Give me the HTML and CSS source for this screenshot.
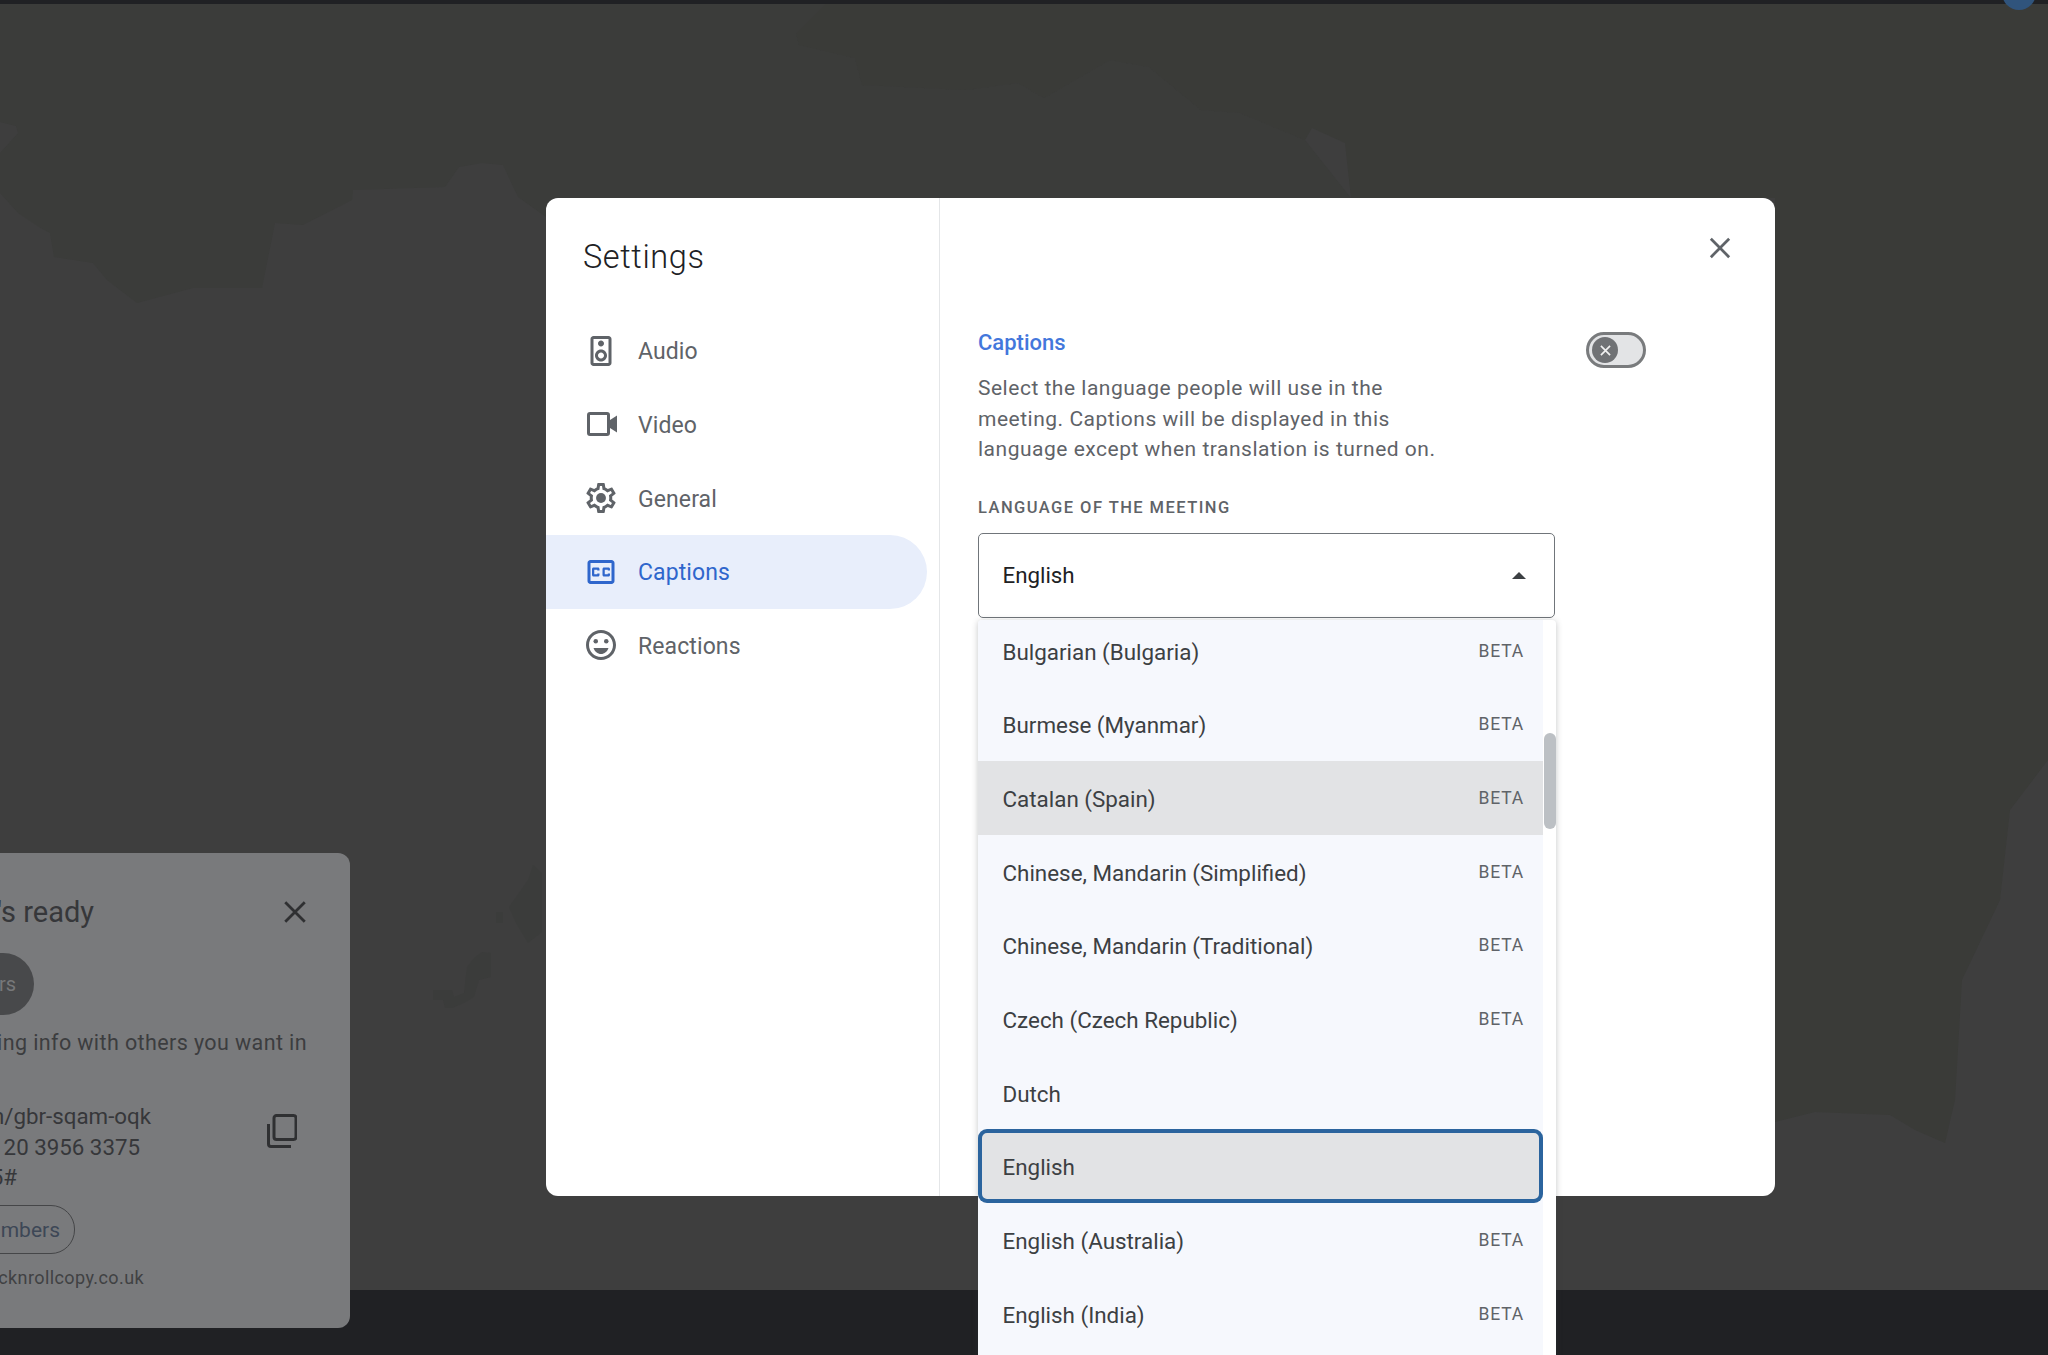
FILE: index.html
```html
<!DOCTYPE html>
<html lang="en">
<head>
    <meta charset="UTF-8">
    <meta name="viewport" content="width=device-width, initial-scale=1.0">
    <title>Settings</title>
    <link rel="stylesheet" href="styles.css">
</head>
<body>
    <div class="top-bar"></div>
    <div class="avatar"></div>

    <!-- Map behind the meeting -->
    <div class="stage">
        <svg class="map" viewBox="0 0 2048 1355" xmlns="http://www.w3.org/2000/svg">
            <polygon class="land" points="0,0 829,0 796,33 799,45 855,58 862,85 966,90 1018,83 1044,98 1110,60 1149,67 1201,110 1240,113 1305,140 1351,198 600,300 546,217 518,197 503,165 482,163 459,167 445,187 353,190 352,200 303,225 275,223 262,288 193,288 137,303 107,280 93,263 54,257 50,233 39,227 18,213 0,193 0,153 18,133 16,126 0,122"/>
            <polygon class="land-dark" points="829,0 796,33 799,45 855,58 862,85 966,90 1018,83 1044,98 1110,60 1149,67 1201,110 1240,113 1305,140 1312,128 1345,143 1351,198 1775,198 1775,1122 1815,1112 1890,1115 1915,1130 1945,1143 1955,1100 1962,980 2000,900 2010,810 2048,760 2048,0"/>
            <polygon class="island" points="509,907 528,880 533,865 542,873 542,932 528,943 516,923"/>
            <rect class="island" x="496" y="912" width="7" height="11"/>
            <polygon class="island" points="433,990 452,990 454,997 464,993 467,967 474,958 482,952 491,953 491,977 479,980 474,997 464,1003 452,1008 445,1008 443,1000 433,1000"/>
        </svg>
    </div>
    <div class="bottom-bar"></div>

    <!-- Meeting ready card, cut off by the left edge -->
    <div class="ready-card">
        <div class="ready-line ready-title">
            <span>Your meeting's ready</span>
            <svg class="ready-close" viewBox="0 0 24 24"><path d="M3 3l18 18M21 3L3 21"/></svg>
        </div>
        <div class="ready-line ready-add"><span class="add-pill">Add others</span></div>
        <div class="ready-line ready-share">Or share this meeting info with others you want in</div>
        <div class="ready-info">
            <div class="ready-lines">
                <div class="ready-line">meet.google.com/gbr-sqam-oqk</div>
                <div class="ready-line">Dial-in: (GB) +44 20 3956 3375</div>
                <div class="ready-line">PIN: 123 456 785#</div>
            </div>
            <svg class="copy-icon" viewBox="0 0 30 34"><path d="M7 7v-3a2.500 2.500 0 0 1 2.500-2.500h17a2.500 2.500 0 0 1 2.500 2.500v19a2.500 2.500 0 0 1-2.500 2.500h-17a2.500 2.500 0 0 1-2.500-2.500z M1.500 10v20a2.500 2.500 0 0 0 2.500 2.500h20"/></svg>
        </div>
        <div class="ready-line ready-more"><span class="more-pill">More numbers</span></div>
        <div class="ready-line ready-joined">Joined as hello@rocknrollcopy.co.uk</div>
    </div>

    <!-- Settings dialog -->
    <div class="dialog">
        <div class="sidebar">
            <h1 class="dialog-title">Settings</h1>
            <div class="nav">
                <div class="nav-item">
                    <svg class="nav-icon" viewBox="0 0 24 24"><path d="M17 2H7c-1.100 0-2 .9-2 2v16c0 1.100.9 1.990 2 1.990L17 22c1.100 0 2-.9 2-2V4c0-1.100-.9-2-2-2zM7 20V4h10v16H7zm5-11c1.100 0 2-.9 2-2s-.9-2-2-2c-1.110 0-2 .9-2 2s.89 2 2 2zm0 2c-2.210 0-4 1.790-4 4s1.790 4 4 4 4-1.790 4-4-1.790-4-4-4zm0 6c-1.100 0-2-.9-2-2s.9-2 2-2 2 .9 2 2-.9 2-2 2z"/></svg>
                    <span class="nav-label">Audio</span>
                </div>
                <div class="nav-item">
                    <svg class="nav-icon" viewBox="0 0 36 36"><rect class="cam-body" x="5.500" y="7.500" width="20" height="21" rx="1.500"/><polygon points="27,14 34,9.500 34,26.500 27,22"/></svg>
                    <span class="nav-label">Video</span>
                </div>
                <div class="nav-item">
                    <svg class="nav-icon" viewBox="0 0 24 24"><path d="M19.430 12.980c.04-.32.07-.64.07-.98s-.03-.66-.07-.98l2.110-1.650c.19-.15.24-.42.12-.64l-2-3.460c-.12-.22-.39-.3-.61-.22l-2.490 1c-.52-.4-1.080-.73-1.690-.98l-.38-2.650C14.460 2.180 14.250 2 14 2h-4c-.25 0-.46.18-.49.42l-.38 2.650c-.61.25-1.170.59-1.690.98l-2.490-1c-.23-.09-.49 0-.61.22l-2 3.460c-.13.22-.07.49.12.64l2.110 1.650c-.04.32-.07.65-.07.98s.03.66.07.98l-2.110 1.650c-.19.15-.24.42-.12.64l2 3.460c.12.22.39.3.61.22l2.490-1c.52.4 1.080.73 1.690.98l.38 2.650c.03.24.24.42.49.42h4c.25 0 .46-.18.49-.42l.38-2.650c.61-.25 1.170-.59 1.690-.98l2.490 1c.23.09.49 0 .61-.22l2-3.460c.12-.22.07-.49-.12-.64l-2.110-1.650zm-1.980-1.710c.04.31.05.52.05.73 0 .21-.02.43-.05.73l-.14 1.130.89.7 1.080.84-.7 1.210-1.270-.51-1.040-.42-.9.68c-.43.32-.84.56-1.250.73l-1.060.43-.16 1.130-.2 1.350h-1.400l-.19-1.350-.16-1.130-1.060-.43c-.43-.18-.83-.41-1.230-.71l-.91-.7-1.060.43-1.270.51-.7-1.210 1.080-.84.89-.7-.14-1.130c-.03-.31-.05-.54-.05-.74s.02-.43.05-.73l.14-1.130-.89-.7-1.080-.84.7-1.210 1.270.51 1.040.42.9-.68c.43-.32.84-.56 1.250-.73l1.060-.43.16-1.130.2-1.350h1.390l.19 1.350.16 1.130 1.060.43c.43.18.83.41 1.230.71l.91.7 1.060-.43 1.270-.51.7 1.210-1.070.85-.89.7.14 1.130z"/><circle cx="12" cy="12" r="3.300"/></svg>
                    <span class="nav-label">General</span>
                </div>
                <div class="nav-item nav-item-active">
                    <svg class="nav-icon" viewBox="0 0 24 24"><path d="M19 4H5c-1.110 0-2 .9-2 2v12c0 1.100.89 2 2 2h14c1.100 0 2-.9 2-2V6c0-1.100-.9-2-2-2zm0 14H5V6h14v12zM7 15h3c.55 0 1-.45 1-1v-1H9.500v.5h-2v-3h2v.5H11v-1c0-.55-.45-1-1-1H7c-.55 0-1 .45-1 1v4c0 .55.45 1 1 1zm7 0h3c.55 0 1-.45 1-1v-1h-1.500v.5h-2v-3h2v.5H18v-1c0-.55-.45-1-1-1h-3c-.55 0-1 .45-1 1v4c0 .55.45 1 1 1z"/></svg>
                    <span class="nav-label">Captions</span>
                </div>
                <div class="nav-item">
                    <svg class="nav-icon" viewBox="0 0 24 24"><circle cx="15.500" cy="9.500" r="1.500"/><circle cx="8.500" cy="9.500" r="1.500"/><path d="M12 18c2.280 0 4.220-1.660 5-4H7c.78 2.340 2.720 4 5 4z"/><path d="M11.990 2C6.470 2 2 6.480 2 12s4.470 10 9.990 10C17.520 22 22 17.520 22 12S17.520 2 11.990 2zM12 20c-4.420 0-8-3.580-8-8s3.580-8 8-8 8 3.580 8 8-3.580 8-8 8z"/></svg>
                    <span class="nav-label">Reactions</span>
                </div>
            </div>
        </div>

        <div class="panel">
            <svg class="dialog-close" viewBox="0 0 24 24"><path d="M2 2l20 20M22 2L2 22"/></svg>

            <div class="caption-row">
                <div class="caption-text">
                    <h2 class="section-title">Captions</h2>
                    <p class="section-desc">Select the language people will use in the meeting. Captions will be displayed in this language except when translation is turned on.</p>
                </div>
                <div class="toggle">
                    <div class="toggle-knob">
                        <svg viewBox="0 0 12 12"><path d="M1 1l10 10M11 1L1 11"/></svg>
                    </div>
                </div>
            </div>

            <div class="field-label">LANGUAGE OF THE MEETING</div>

            <div class="select-wrap">
                <div class="select">
                    English
                    <span class="caret"></span>
                </div>

                <div class="dropdown">
                    <div class="options">
                        <div class="option">Bulgarian (Bulgaria)<span class="beta">BETA</span></div>
                        <div class="option">Burmese (Myanmar)<span class="beta">BETA</span></div>
                        <div class="option option-hover">Catalan (Spain)<span class="beta">BETA</span></div>
                        <div class="option">Chinese, Mandarin (Simplified)<span class="beta">BETA</span></div>
                        <div class="option">Chinese, Mandarin (Traditional)<span class="beta">BETA</span></div>
                        <div class="option">Czech (Czech Republic)<span class="beta">BETA</span></div>
                        <div class="option">Dutch</div>
                        <div class="option option-focus">English</div>
                        <div class="option">English (Australia)<span class="beta">BETA</span></div>
                        <div class="option">English (India)<span class="beta">BETA</span></div>
                    </div>
                    <div class="scroll-track">
                        <div class="scroll-thumb"></div>
                    </div>
                </div>
            </div>
        </div>
    </div>
</body>
</html>
```

FILE: styles.css
```css
html,
body {
    margin: 0;
    height: 100%;
}

body {
    display: flex;
    flex-direction: column;
    height: 1355px;
    overflow: hidden;
    position: relative;
    background-color: #3e3e3e;
    font-family: Roboto, "Liberation Sans", sans-serif;
}

/* Page frame */
.top-bar {
    height: 4px;
    background-color: #202124;
}

.stage {
    flex: 1;
}

.bottom-bar {
    height: 65px;
    background-color: #202124;
}

.avatar {
    position: absolute;
    top: -24px;
    right: 12px;
    width: 34px;
    height: 34px;
    border-radius: 50%;
    background-color: #30547c;
}

.map {
    position: absolute;
    top: 0;
    left: 0;
    width: 2048px;
    height: 1355px;
    z-index: -1;
}

.land {
    fill: #3b3c3a;
}

.land-dark {
    fill: #3a3b38;
}

.island {
    fill: #3b3c3b;
}

/* Meeting ready card */
.ready-card {
    position: absolute;
    left: 0;
    top: 853px;
    width: 350px;
    height: 475px;
    overflow: hidden;
    background-color: #797a7c;
    border-radius: 0 12px 12px 0;
    color: #36373a;
    font-size: 22.300px;
}

.ready-line {
    display: flex;
    justify-content: flex-end;
    align-items: center;
    white-space: nowrap;
}

.ready-title {
    height: 40px;
    margin-top: 39px;
    padding-right: 42px;
    font-size: 29px;
    gap: 188px;
}

.ready-close {
    width: 26px;
    height: 26px;
    flex: none;
}

.ready-close path {
    stroke: #2f3032;
    stroke-width: 2.600;
    fill: none;
}

.ready-add {
    margin-top: 21px;
    padding-right: 316px;
}

.add-pill {
    display: flex;
    align-items: center;
    height: 62px;
    padding: 0 18px 0 30px;
    border-radius: 31px;
    background-color: #48494b;
    color: #77787a;
    font-size: 20px;
}

.ready-share {
    height: 30px;
    margin-top: 12px;
    padding-right: 43px;
    color: #3c3d3f;
    font-size: 21.500px;
    letter-spacing: 0.400px;
}

.ready-info {
    display: flex;
    align-items: center;
    margin-top: 44px;
    height: 92px;
}

.ready-lines {
    width: 151px;
    flex: none;
    line-height: 30.600px;
}

.ready-lines .ready-line:nth-child(2) {
    padding-right: 11px;
}

.ready-lines .ready-line:nth-child(3) {
    padding-right: 134px;
}

.copy-icon {
    width: 30px;
    height: 34px;
    margin-left: 116px;
    margin-top: -33px;
    flex: none;
}

.copy-icon path {
    fill: none;
    stroke: #2f3032;
    stroke-width: 3;
}

.ready-more {
    margin-top: 12px;
    padding-right: 275px;
}

.more-pill {
    display: flex;
    align-items: center;
    height: 47px;
    padding: 0 14px 0 24px;
    border: 1px solid #454648;
    border-radius: 24px;
    color: #3d4756;
    font-size: 21px;
}

.ready-joined {
    margin-top: 13px;
    padding-right: 206px;
    color: #404143;
    font-size: 18px;
    letter-spacing: 0.400px;
}

/* Settings dialog */
.dialog {
    position: absolute;
    left: 546px;
    top: 198px;
    width: 1229px;
    height: 998px;
    display: flex;
    background-color: #ffffff;
    border-radius: 12px;
}

.sidebar {
    width: 394px;
    flex: none;
    box-sizing: border-box;
    border-right: 1px solid #e4e6e8;
    border-radius: 12px 0 0 12px;
    padding-right: 12px;
}

.dialog-title {
    margin: 37px 0 0 37px;
    height: 44px;
    line-height: 44px;
    font-size: 32.500px;
    font-weight: 300;
    letter-spacing: 0.600px;
    color: #202124;
}

.nav {
    margin-top: 35px;
}

.nav-item {
    display: flex;
    align-items: center;
    gap: 19px;
    height: 73.670px;
    padding-left: 37px;
    border-radius: 0 37px 37px 0;
    font-size: 23px;
    letter-spacing: 0.100px;
    color: #5f6368;
}

.nav-label {
    padding-top: 2px;
}

.nav-icon {
    width: 36px;
    height: 36px;
    flex: none;
    fill: #5f6368;
}

.cam-body {
    fill: none;
    stroke: #5f6368;
    stroke-width: 3;
}

.nav-item-active {
    background-color: #e8eefb;
    color: #2f66cc;
}

.nav-item-active .nav-icon {
    fill: #2f66cc;
}

.panel {
    flex: 1;
    position: relative;
    padding: 129px 0 0 38px;
}

.dialog-close {
    position: absolute;
    top: 39px;
    right: 44px;
    width: 22px;
    height: 22px;
}

.dialog-close path {
    fill: none;
    stroke: #5f6368;
    stroke-width: 3;
}

.caption-row {
    display: flex;
}

.caption-text {
    width: 608px;
    flex: none;
}

.section-title {
    margin: 0;
    box-sizing: border-box;
    height: 30px;
    padding-top: 1px;
    line-height: 30px;
    font-size: 22px;
    font-weight: 500;
    color: #4377dc;
}

.section-desc {
    margin: 16px 0 0;
    max-width: 470px;
    font-size: 21px;
    line-height: 30.600px;
    letter-spacing: 0.510px;
    color: #5f6368;
}

/* Toggle, switched off */
.toggle {
    box-sizing: border-box;
    width: 60px;
    height: 36px;
    margin-top: 5px;
    padding: 2px 3px;
    border: 3px solid #797b7d;
    border-radius: 18px;
    background-color: #e3e4e6;
}

.toggle-knob {
    display: flex;
    align-items: center;
    justify-content: center;
    width: 26px;
    height: 26px;
    border-radius: 50%;
    background-color: #707275;
}

.toggle-knob svg {
    width: 11px;
    height: 11px;
}

.toggle-knob path {
    fill: none;
    stroke: #f1f1f1;
    stroke-width: 1.800;
}

.field-label {
    margin-top: 32px;
    height: 22px;
    line-height: 22px;
    font-size: 16.500px;
    font-weight: 500;
    letter-spacing: 1.450px;
    color: #5f6368;
}

/* Language select */
.select-wrap {
    position: relative;
    width: 577px;
    margin-top: 14px;
}

.select {
    box-sizing: border-box;
    display: flex;
    align-items: center;
    justify-content: space-between;
    height: 85px;
    padding: 0 28px 0 23.500px;
    border: 1px solid #70757a;
    border-radius: 5px;
    font-size: 22.300px;
    color: #202124;
}

.caret {
    width: 0;
    height: 0;
    border-left: 7px solid transparent;
    border-right: 7px solid transparent;
    border-bottom: 7px solid #3c4043;
}

.dropdown {
    position: absolute;
    top: 87px;
    left: 0;
    width: 578px;
    height: 735px;
    display: flex;
    overflow: hidden;
    background-color: #ffffff;
    border-radius: 4px 4px 0 0;
    box-shadow: 0 1px 6px rgba(60, 64, 67, 0.300);
}

.options {
    flex: 1;
    margin-top: -6px;
    background-color: #f6f8fd;
}

.option {
    box-sizing: border-box;
    display: flex;
    align-items: center;
    justify-content: space-between;
    height: 73.670px;
    padding: 2px 19px 0 24.500px;
    font-size: 22.400px;
    color: #3c4043;
}

.option-hover {
    background-color: #e2e3e5;
}

.option-focus {
    border-radius: 9px;
    background-color: #e2e3e5;
    box-shadow: inset 0 0 0 4px #2b649e;
}

.beta {
    margin-top: -2px;
    font-size: 17.500px;
    letter-spacing: 0.800px;
    color: #5f6368;
}

.scroll-track {
    width: 13px;
    flex: none;
}

.scroll-thumb {
    width: 12px;
    height: 96px;
    margin: 113px 0 0 1px;
    border-radius: 6px;
    background-color: #bcc0c4;
}
```
